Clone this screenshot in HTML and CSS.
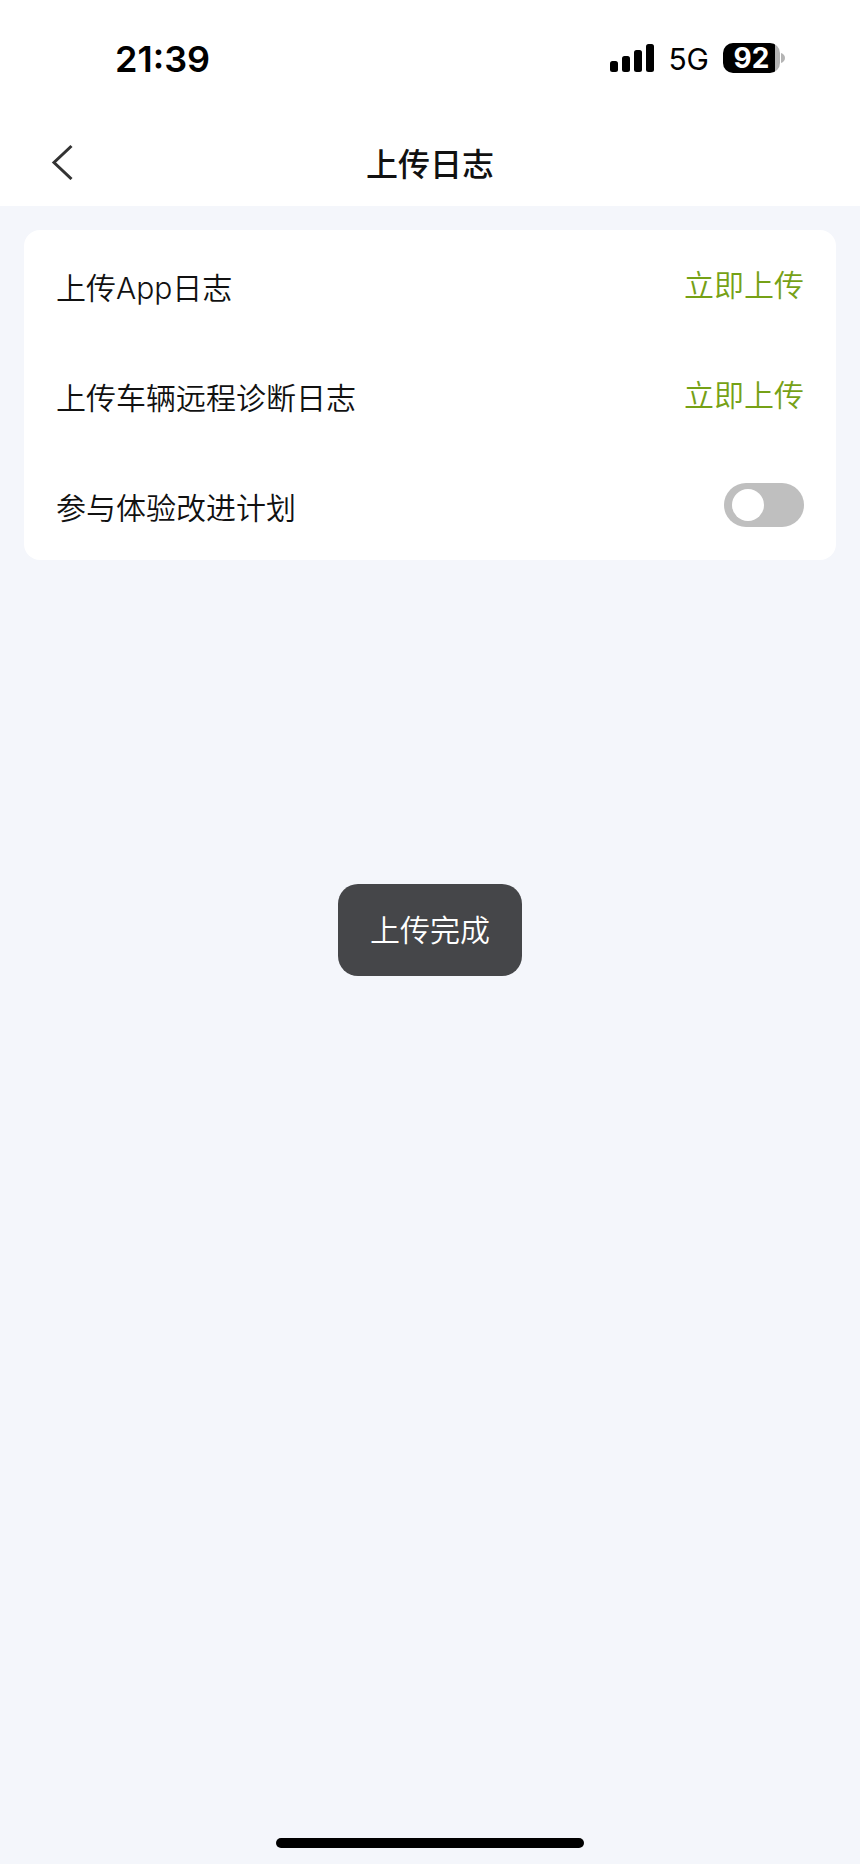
FILE: index.html
```html
<!DOCTYPE html>
<html lang="zh-CN">
<head>
<meta charset="utf-8">
<meta name="viewport" content="width=device-width, initial-scale=1">
<title>上传日志</title>
<link rel="stylesheet" href="styles.css">
</head>
<body class="screen">
  <header class="top">
    <div class="status">
      <time class="clock">21:39</time>
      <div class="indicators">
        <svg class="signal" width="44" height="28" viewBox="0 0 44 28" aria-hidden="true">
          <rect x="0" y="17" width="8" height="11" rx="2.5"/>
          <rect x="12" y="12" width="8" height="16" rx="2.5"/>
          <rect x="24" y="6" width="8" height="22" rx="2.5"/>
          <rect x="36" y="0" width="8" height="28" rx="2.5"/>
        </svg>
        <span class="network">5G</span>
        <div class="battery">
          <span class="level">92</span>
          <svg class="cap" width="4" height="10" viewBox="0 0 4 10" aria-hidden="true"><path d="M0 0C2.500 1 4 2.500 4 5S2.500 9 0 10Z"/></svg>
        </div>
      </div>
    </div>
    <nav class="navbar">
      <button class="back" type="button" aria-label="返回">
        <svg width="24" height="36" viewBox="0 0 24 36" aria-hidden="true"><path d="M21.500 2L4 18.500L21.500 35"/></svg>
      </button>
      <h1 class="title">上传日志</h1>
    </nav>
  </header>
  <main class="content">
    <ul class="card">
      <li class="row">
        <span class="label">上传App日志</span>
        <button class="action" type="button">立即上传</button>
      </li>
      <li class="row">
        <span class="label">上传车辆远程诊断日志</span>
        <button class="action" type="button">立即上传</button>
      </li>
      <li class="row">
        <label class="label" for="improve">参与体验改进计划</label>
        <input class="switch" id="improve" type="checkbox" role="switch">
      </li>
    </ul>
  </main>
  <footer class="home"><div class="home-bar"></div></footer>
  <div class="toast-layer"><div class="toast" role="status">上传完成</div></div>
</body>
</html>
```

FILE: styles.css
```css
* {
  box-sizing: border-box;
}

.screen {
  display: flex;
  flex-direction: column;
  min-height: 100vh;
  margin: 0;
  background: #f4f6fb;
  color: #111;
  font-family: Inter, "Noto Sans CJK SC", sans-serif;
  font-weight: 350;
  font-size: 30px;
  line-height: 44px;
}

.top {
  background: #fff;
}

.status {
  display: flex;
  align-items: center;
  justify-content: space-between;
  height: 116px;
  padding: 0 75px 0 115px;
  color: #000;
}

.clock {
  padding-top: 2px;
  font-size: 36px;
  font-weight: 600;
}

.indicators {
  display: flex;
  align-items: center;
}

.network {
  margin: 2px 14px 0;
  font-size: 30px;
  font-weight: 400;
}

.battery {
  display: flex;
  align-items: center;
  gap: 1px;
}

.level {
  width: 57px;
  height: 30px;
  border-radius: 10px;
  background: linear-gradient(to right, #000 52px, #b4b4b4 52px);
  color: #fff;
  font-size: 28px;
  font-weight: 700;
  line-height: 30px;
  text-align: center;
}

.cap {
  fill: #b4b4b4;
}

.navbar {
  display: grid;
  grid-template-columns: 1fr auto 1fr;
  align-items: center;
  height: 90px;
  padding: 0 48px;
}

.back {
  display: flex;
  justify-self: start;
  padding: 2px 0 0 2px;
  border: 0;
  background: none;
}

.back path {
  fill: none;
  stroke: #333;
  stroke-width: 3;
}

.title {
  margin: 0;
  padding-top: 8px;
  font-size: 32px;
  font-weight: 500;
}

.content {
  flex: 1;
  padding: 24px;
}

.card {
  margin: 0;
  padding: 0 32px;
  border-radius: 16px;
  background: #fff;
  list-style: none;
}

.row {
  display: flex;
  align-items: center;
  justify-content: space-between;
  height: 110px;
}

.label {
  padding-top: 6px;
}

.action {
  padding: 0;
  border: 0;
  background: none;
  color: #76a116;
  font: inherit;
}

.switch {
  display: flex;
  align-items: center;
  width: 80px;
  height: 44px;
  margin: 0;
  padding: 0 8px;
  border-radius: 22px;
  background: #bfbfbf;
  appearance: none;
}

.switch::before {
  width: 32px;
  height: 32px;
  border-radius: 50%;
  background: #fff;
  content: "";
}

.switch:checked {
  justify-content: flex-end;
  background: #76a116;
}

.home {
  display: flex;
  justify-content: center;
  padding-bottom: 16px;
}

.home-bar {
  width: 308px;
  height: 10px;
  border-radius: 5px;
  background: #000;
}

.toast-layer {
  position: fixed;
  inset: 0;
  display: grid;
  place-content: center;
  padding-bottom: 4px;
  pointer-events: none;
}

.toast {
  padding: 24px 32px;
  border-radius: 20px;
  background: #454649;
  color: #fff;
}
```
